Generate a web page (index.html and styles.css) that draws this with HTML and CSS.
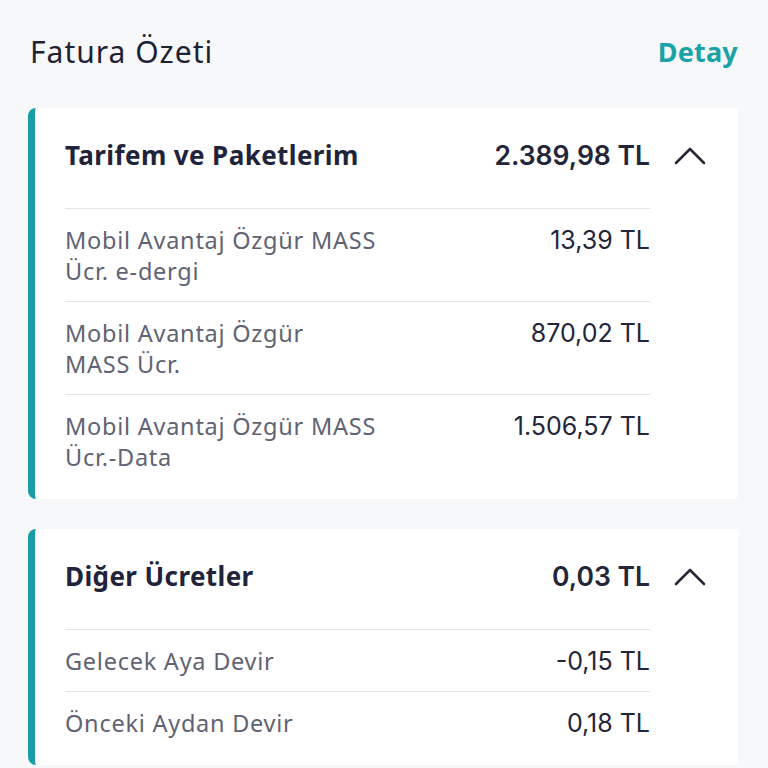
FILE: index.html
```html
<!DOCTYPE html>
<html lang="tr">
<head>
<meta charset="utf-8">
<link rel="stylesheet" href="styles.css">
</head>
<body>
<main class="page">
  <header class="page-head">
    <h1 class="page-title">Fatura Özeti</h1>
    <a class="detail-link">Detay</a>
  </header>

  <section class="card">
    <div class="card-body">
      <div class="card-head">
        <h2 class="card-title">Tarifem ve Paketlerim</h2>
        <span class="card-total">2.389,98 TL</span>
      </div>
      <div class="row">
        <span class="row-label">Mobil Avantaj Özgür MASS<br>Ücr. e-dergi</span>
        <span class="row-value">13,39 TL</span>
      </div>
      <div class="row">
        <span class="row-label">Mobil Avantaj Özgür<br>MASS Ücr.</span>
        <span class="row-value">870,02 TL</span>
      </div>
      <div class="row">
        <span class="row-label">Mobil Avantaj Özgür MASS<br>Ücr.-Data</span>
        <span class="row-value">1.506,57 TL</span>
      </div>
    </div>
    <div class="chev">
      <svg width="32" height="20" viewBox="0 0 32 20"><path d="M2 18 L16 4 L30 18" fill="none" stroke="#252836" stroke-width="2.6" stroke-linecap="round" stroke-linejoin="round"/></svg>
    </div>
  </section>

  <section class="card">
    <div class="card-body">
      <div class="card-head">
        <h2 class="card-title">Diğer Ücretler</h2>
        <span class="card-total">0,03 TL</span>
      </div>
      <div class="row">
        <span class="row-label">Gelecek Aya Devir</span>
        <span class="row-value">-0,15 TL</span>
      </div>
      <div class="row">
        <span class="row-label">Önceki Aydan Devir</span>
        <span class="row-value">0,18 TL</span>
      </div>
    </div>
    <div class="chev">
      <svg width="32" height="20" viewBox="0 0 32 20"><path d="M2 18 L16 4 L30 18" fill="none" stroke="#252836" stroke-width="2.6" stroke-linecap="round" stroke-linejoin="round"/></svg>
    </div>
  </section>
</main>
</body>
</html>
```

FILE: styles.css
```css
* { box-sizing: border-box; }
html, body { margin: 0; padding: 0; }
body {
  background: #f7f8fa;
  font-family: "Noto Sans", "Lato", sans-serif;
  color: #222536;
  width: 768px;
  height: 768px;
  overflow: hidden;
}
.page {
  padding: 27px 30px 0 28px;
  display: flex;
  flex-direction: column;
  gap: 30px;
}
.page-head {
  display: flex;
  justify-content: space-between;
  align-items: center;
  height: 51px;
  padding-left: 2px;
  padding-bottom: 2px;
}
.page-title {
  margin: 0;
  font-size: 30px;
  font-weight: 400;
  letter-spacing: 1px;
  color: #1f2232;
}
.detail-link {
  font-size: 27px;
  font-weight: 700;
  letter-spacing: 0.2px;
  color: #1ba2a8;
}
.card {
  background: #fff;
  border-left: 7px solid #1a9ea6;
  border-radius: 8px 4px 4px 8px;
  display: flex;
  padding: 0 32px 12px 30px;
}
.card-body {
  flex: 1;
  display: flex;
  flex-direction: column;
}
.card-head {
  display: flex;
  justify-content: space-between;
  align-items: center;
  height: 101px;
  padding-bottom: 6px;
  border-bottom: 1.5px solid #e4e5ea;
}
.card-title {
  margin: 0;
  font-size: 26px;
  font-weight: 700;
  letter-spacing: 0.4px;
  color: #20233a;
}
.card-total {
  font-family: "Inter", "Roboto", sans-serif;
  font-size: 26.5px;
  font-weight: 600;
  color: #23263a;
}
.row {
  display: flex;
  justify-content: space-between;
  align-items: flex-start;
  padding: 16px 0 14px;
  border-bottom: 1.5px solid #e4e5ea;
}
.row:last-child { border-bottom: none; }
.row-label {
  font-size: 23.5px;
  line-height: 31px;
  letter-spacing: 0.75px;
  color: #5f6373;
}
.row-value {
  font-family: "Inter", "Roboto", sans-serif;
  font-size: 25px;
  line-height: 31px;
  color: #23263a;
}
.chev {
  width: 56px;
  height: 93px;
  display: flex;
  align-items: center;
  justify-content: flex-end;
}
```
